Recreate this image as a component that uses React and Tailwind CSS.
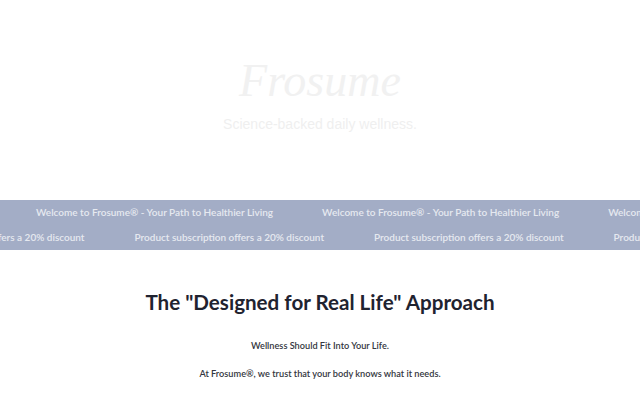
import React from 'react';

const welcome = 'Welcome to Frosume® - Your Path to Healthier Living';
const promo = 'Product subscription offers a 20% discount';

const App = () => {
  return (
    <div className="w-[640px] h-[400px] overflow-hidden bg-white font-['Lato',sans-serif]">
      {/* Hero */}
      <div className="h-[200px] flex flex-col items-center pt-[55px]">
        <h1 className="font-['Liberation_Serif',serif] italic text-[46px] leading-[52px] text-[#f1f1f1]">Frosume</h1>
        <p className="mt-[8px] font-['Liberation_Sans',sans-serif] text-[14px] leading-[18px] text-[#efefef]">Science-backed daily wellness.</p>
      </div>

      {/* Marquee banner */}
      <div className="h-[50px] bg-[#a3adc6] overflow-hidden text-[10px] font-semibold text-[#e6e9f0] whitespace-nowrap">
        <div className="h-[25px] flex items-center gap-[49px] ml-[36px]">
          {[0, 1, 2].map((i) => (
            <span key={i}>{welcome}</span>
          ))}
        </div>
        <div className="h-[25px] flex items-center gap-[50px] ml-[-105px]">
          {[0, 1, 2, 3].map((i) => (
            <span key={i}>{promo}</span>
          ))}
        </div>
      </div>

      {/* Approach section */}
      <div className="flex flex-col items-center pt-[39px]">
        <h2 className="text-[20.6px] leading-[26px] font-bold text-[#1f2330]">The "Designed for Real Life" Approach</h2>
        <p className="mt-[24px] text-[9.2px] font-semibold text-[#333640]">Wellness Should Fit Into Your Life.</p>
        <p className="mt-[14px] text-[9.2px] font-semibold text-[#333640]">At Frosume®, we trust that your body knows what it needs.</p>
      </div>
    </div>
  );
};

export default App;
